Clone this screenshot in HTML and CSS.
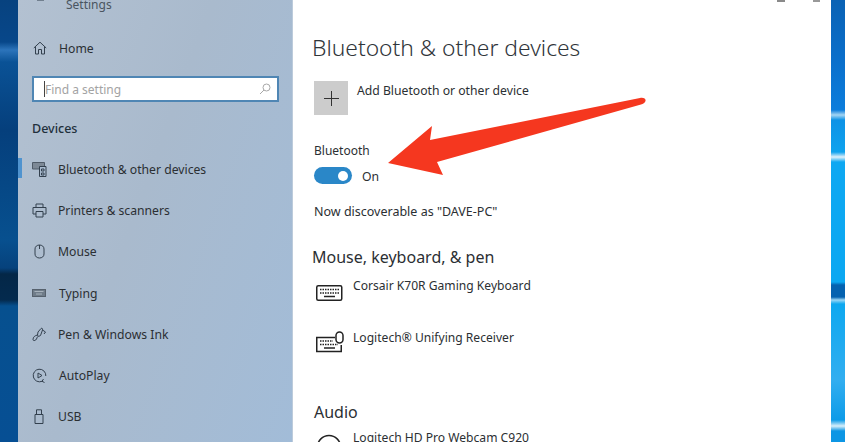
FILE: index.html
```html
<!DOCTYPE html>
<html lang="en">

<head>
    <meta charset="UTF-8">
    <meta name="viewport" content="width=device-width, initial-scale=1.0">
    <title>Settings</title>
    <link rel="stylesheet" href="styles.css">
</head>

<body>
    <div class="desktop">
        <div class="strip-left"></div>

        <aside class="sidebar">
            <div class="title-row">
                <svg class="back" width="10" height="10" viewBox="0 0 10 10"><path d="M9 1H2" /></svg>
                <span>Settings</span>
            </div>
            <div class="home-row">
                <svg class="icon" width="14" height="14" viewBox="0 0 14 14"><path d="M.8 7 7 1.200 13.200 7M2.500 5.500V13H5.500V8.500H8.500V13H11.500V5.500" /></svg>
                <span>Home</span>
            </div>
            <div class="search">
                <span class="caret"></span>
                <span class="search-text">Find a setting</span>
                <svg class="search-icon" width="12" height="12" viewBox="0 0 12 12"><circle cx="7.500" cy="4.500" r="3.500" /><path d="M5 7 1 11" /></svg>
            </div>
            <h2 class="group">Devices</h2>
            <nav class="nav">
                <div class="nav-item active">
                    <svg class="icon" width="15" height="15" viewBox="0 0 15 15"><path class="dev-fill" d="M.5 .5H12.500V8.500H7.500V7H.5Z" /><path class="dev-box" d="M7.500 4.500H14V14.500H7.500ZM9.500 7H12V9H9.500ZM9.500 11H12V13H9.500Z" /></svg>
                    <span>Bluetooth &amp; other devices</span>
                </div>
                <div class="nav-item">
                    <svg class="icon" width="15" height="15" viewBox="0 0 15 15"><path d="M4 4.500V1H11V4.500M4 11H1V4.500H14V11H11M4 8.500H11V14H4Z" /></svg>
                    <span>Printers &amp; scanners</span>
                </div>
                <div class="nav-item">
                    <svg class="icon" width="15" height="15" viewBox="0 0 15 15"><path d="M3 5C3 2.500 5 1 7.500 1S12 2.500 12 5V10C12 12.500 10 14 7.500 14S3 12.500 3 10ZM7.500 1V5" /></svg>
                    <span>Mouse</span>
                </div>
                <div class="nav-item">
                    <svg class="icon" width="15" height="15" viewBox="0 0 15 15"><rect class="key-fill" x=".5" y="3.500" width="13" height="7" /><path class="key-line" d="M2.500 5.500H11.500M4 8H10" /></svg>
                    <span class="typing">Typing</span>
                </div>
                <div class="nav-item">
                    <svg class="icon" width="15" height="15" viewBox="0 0 15 15"><path d="M6 5 9 1.500C10 .8 11 1.800 10.500 3L8.500 8.500 6.500 9.500 5.500 8ZM10.500 3 13.500 5 12 7M5.500 8C3 8.500 1 10 1 12.500 1 14 3.500 14 4.500 12S5 10 6 9.500" /></svg>
                    <span>Pen &amp; Windows Ink</span>
                </div>
                <div class="nav-item">
                    <svg class="icon" width="15" height="15" viewBox="0 0 15 15"><path d="M10 13.300A6.300 6.300 0 1 1 13.800 8M11.500 11 10 13.300 12.500 14.500M6 5 10 7.500 6 10Z" /></svg>
                    <span class="typing">AutoPlay</span>
                </div>
                <div class="nav-item">
                    <svg class="icon" width="15" height="15" viewBox="0 0 15 15"><path d="M3 5.500H11V14.500H3ZM4.500 5.500V.8H9.500V5.500" /></svg>
                    <span>USB</span>
                </div>
            </nav>
        </aside>

        <main class="main">
            <span class="ctl-min"></span>
            <span class="ctl-close"></span>
            <h1>Bluetooth &amp; other devices</h1>
            <div class="add-row">
                <div class="add-box">
                    <svg width="15" height="15" viewBox="0 0 15 15"><path d="M7.500 0V15M0 7.500H15" /></svg>
                </div>
                <span>Add Bluetooth or other device</span>
            </div>
            <div class="bt-label">Bluetooth</div>
            <div class="toggle-row">
                <span class="toggle"><span class="knob"></span></span>
                <span class="toggle-label">On</span>
            </div>
            <div class="discover">Now discoverable as "DAVE-PC"</div>

            <h3>Mouse, keyboard, &amp; pen</h3>
            <div class="device">
                <svg width="28" height="20" viewBox="0 0 28 20"><rect x=".75" y="4.750" width="25" height="14.500" rx="1.500" /><path class="dots" d="M4 8.500H23M4 12H23" /><path d="M8 15.500H19" /></svg>
                <span>Corsair K70R Gaming Keyboard</span>
            </div>
            <div class="device second">
                <svg width="28" height="22" viewBox="0 0 28 22"><path d="M19 6.500H.75V20.500H25.250V14" /><path class="dots" d="M4 10H17M4 13.500H22" /><path d="M8 17H19" /><rect x="20" y="1" width="7" height="11" rx="3.500" /></svg>
                <span>Logitech® Unifying Receiver</span>
            </div>

            <h3 class="audio">Audio</h3>
            <div class="device webcam">
                <svg width="28" height="20" viewBox="0 0 28 20"><circle cx="13" cy="13" r="11.500" /><circle cx="13" cy="13" r="3" /></svg>
                <span>Logitech HD Pro Webcam C920</span>
            </div>
        </main>

        <div class="strip-right"></div>

        <svg class="arrow" width="262" height="85" viewBox="0 0 262 85">
            <path d="M2 68 46 31 44 45 254 3C258 2.300 260 4 259.500 6 259 8 257 8.800 255 9.500L51 67 57 80Z" />
        </svg>
    </div>
</body>

</html>
```

FILE: styles.css
```css
html,
body {
    margin: 0;
    height: 100%;
    overflow: hidden;
}

body {
    font-family: "Noto Sans", Arial, sans-serif;
    font-size: 12.2px;
    color: #2b2f33;
}

.desktop {
    position: relative;
    display: flex;
    width: 845px;
    height: 442px;
    overflow: hidden;
}

.strip-left {
    width: 18px;
    flex: none;
    background: linear-gradient(180deg, #07427f 0, #07478a 42px, #2c74bb 50px, #0a5296 62px, #053f7c 130px, #07508f 240px, #06427c 268px, #042747 274px, #042a4e 300px, #06508f 306px, #064f94 100%);
}

.strip-right {
    width: 14px;
    flex: none;
    background: linear-gradient(180deg, #0a62b4 0, #0a6fcb 60px, #0c7ddc 110px, #a5d5f3 115px, #0d92e6 120px, #0ea2ee 152px, #e0f1fb 157px, #0ea8f2 162px, #0ba8f2 282px, #0562b0 285px, #0562b0 297px, #9ad6f5 300px, #0da8f0 304px, #32aef0 380px, #0d9be8 420px, #d8effa 426px, #0d96e4 431px);
}

.sidebar {
    width: 275px;
    flex: none;
    box-sizing: border-box;
    border-right: 1px solid #bccbdb;
    background: linear-gradient(110deg, #b3c1d1 0%, #a9bacd 45%, #a2bcd8 100%);
}

.icon,
.back,
.search-icon {
    fill: none;
    stroke: #33404e;
    stroke-width: 1;
}

.title-row {
    display: flex;
    align-items: center;
    height: 8px;
    padding-left: 17px;
    gap: 21px;
    font-size: 12px;
    color: #4a5560;
}

.home-row {
    display: flex;
    align-items: center;
    gap: 12px;
    margin-top: 31px;
    padding-left: 15px;
    height: 18px;
}

.search {
    display: flex;
    align-items: center;
    box-sizing: border-box;
    width: 247px;
    height: 26px;
    margin: 19px 0 0 14px;
    padding: 0 6px 0 10px;
    background: #fff;
    border: 2px solid #4f86b4;
    color: #a3a3a3;
    font-size: 12px;
}

.caret {
    width: 1px;
    height: 16px;
    background: #444;
}

.search-text {
    flex: 1;
}

.search-icon {
    stroke: #a8a8a8;
}

.group {
    margin: 18px 0 0 14px;
    font-size: 12.5px;
    font-weight: 500;
    line-height: 18px;
    color: #22303c;
}

.nav {
    margin-top: 11px;
}

.nav-item {
    display: flex;
    align-items: center;
    gap: 11px;
    height: 41.2px;
    padding-left: 14px;
    position: relative;
}

.active::before {
    content: "";
    position: absolute;
    left: 0;
    top: 9px;
    width: 4px;
    height: 20px;
    background: #4f93cf;
}

.dev-fill {
    fill: #7d8996;
    stroke: #4f5b68;
}

.dev-box {
    fill: #a9bbcf;
}

.typing {
    margin-left: 1px;
}

.key-fill {
    fill: #6f7c89;
    stroke: #56616d;
}

.key-line {
    stroke: #a8b3bd;
}

.main {
    flex: 1;
    box-sizing: border-box;
    padding: 0 0 0 19px;
    background: #fff;
    position: relative;
}

.ctl-min {
    position: absolute;
    top: 0;
    right: 46px;
    width: 8px;
    height: 2px;
    background: #8a8a8a;
}

.ctl-close {
    position: absolute;
    top: 0;
    right: 11px;
    width: 7px;
    height: 2px;
    background: #999;
}

h1 {
    margin: 33px 0 0;
    font-size: 22.800px;
    font-weight: 300;
    line-height: 30px;
    color: #30353a;
}

.add-row {
    display: flex;
    gap: 9px;
    margin: 18px 0 0 2px;
}

.add-box {
    display: flex;
    align-items: center;
    justify-content: center;
    width: 34px;
    height: 34px;
    background: #cccccc;
}

.add-box path {
    stroke: #333;
    fill: none;
}

.add-row span {
    line-height: 18px;
    padding-top: 1px;
}

.bt-label {
    margin: 27px 0 0 2px;
    line-height: 18px;
    font-size: 12px;
}

.toggle-row {
    display: flex;
    align-items: center;
    gap: 10px;
    margin: 7px 0 0 2px;
    height: 17px;
}

.toggle {
    display: flex;
    align-items: center;
    justify-content: flex-end;
    box-sizing: border-box;
    width: 38px;
    height: 17px;
    padding-right: 4px;
    border-radius: 9px;
    background: #2a87c8;
}

.toggle-label {
    padding-top: 2px;
}

.knob {
    width: 10px;
    height: 10px;
    border-radius: 50%;
    background: #fff;
}

.discover {
    margin: 19px 0 0 2px;
    line-height: 18px;
    font-size: 12.500px;
}

h3 {
    margin: 25px 0 0;
    font-size: 16px;
    font-weight: 400;
    line-height: 22px;
    color: #2b2f33;
}

.device {
    display: flex;
    align-items: flex-start;
    gap: 9px;
    margin: 9px 0 0 4px;
    height: 36px;
    font-size: 12.100px;
    line-height: 18px;
}

.device svg {
    margin-top: 4px;
    flex: none;
    fill: none;
    stroke: #222;
    stroke-width: 1.500;
}

.device .dots {
    stroke-dasharray: 1.500 1;
}

.second {
    margin-top: 16px;
}

.second svg {
    margin-top: 2px;
}

.audio {
    margin: 36px 0 0 2px;
}

.webcam {
    margin-top: 6px;
}

.webcam svg {
    margin-top: 5px;
}

.arrow {
    position: absolute;
    left: 386px;
    top: 95px;
}

.arrow path {
    fill: #f5371f;
}
```
